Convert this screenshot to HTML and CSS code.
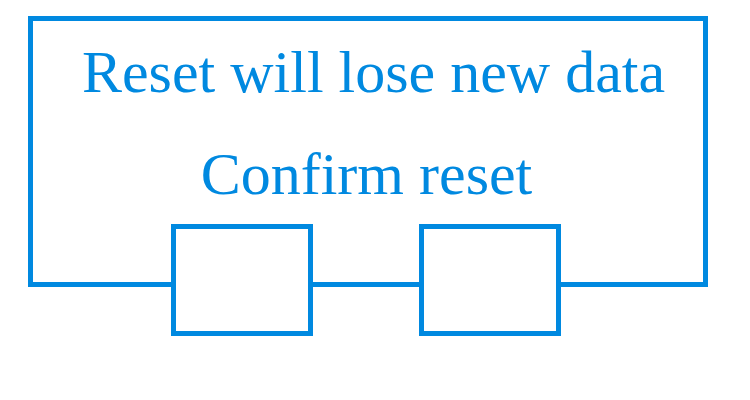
FILE: index.html
```html
<!DOCTYPE html>
<html>
<head>
<meta charset="utf-8">
<link rel="stylesheet" href="styles.css">
</head>
<body>
<div class="dialog">
  <div class="frame">
    <div class="line line-first">Reset will lose new data</div>
    <div class="line line-second">Confirm reset</div>
  </div>
  <div class="buttons">
    <div class="btn"></div>
    <div class="btn"></div>
  </div>
</div>
</body>
</html>
```
FILE: styles.css
```css
html, body {
  margin: 0;
  padding: 0;
  background: #ffffff;
}
.dialog {
  margin: 16px 0 0 28px;
  width: 680px;
}
.frame {
  box-sizing: border-box;
  width: 680px;
  height: 271px;
  border: 5px solid #0089e0;
  font-family: "Liberation Serif", "Times New Roman", serif;
  font-size: 60px;
  line-height: 102px;
  color: #0089e0;
  text-align: center;
}
.line {
  white-space: nowrap;
}
.line-first {
  padding-left: 11px;
}
.line-second {
  padding-right: 3px;
}
.buttons {
  display: flex;
  gap: 106px;
  justify-content: center;
  padding-right: 4px;
  margin-top: -63px;
}
.btn {
  box-sizing: border-box;
  width: 142px;
  height: 112px;
  border: 5px solid #0089e0;
  background: #ffffff;
}
```
